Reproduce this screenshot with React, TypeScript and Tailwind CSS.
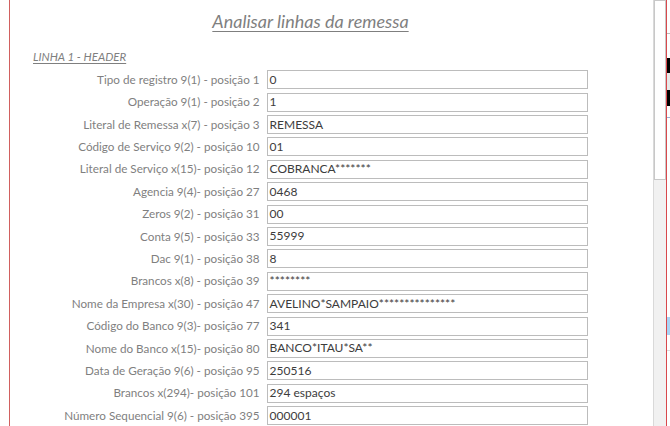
const rows: [string, string][] = [
  ["Tipo de registro 9(1) - posição 1", "0"],
  ["Operação 9(1) - posição 2", "1"],
  ["Literal de Remessa x(7) - posição 3", "REMESSA"],
  ["Código de Serviço 9(2) - posição 10", "01"],
  ["Literal de Serviço x(15)- posição 12", "COBRANCA*******"],
  ["Agencia 9(4)- posição 27", "0468"],
  ["Zeros 9(2) - posição 31", "00"],
  ["Conta 9(5) - posição 33", "55999"],
  ["Dac 9(1) - posição 38", "8"],
  ["Brancos x(8) - posição 39", "********"],
  ["Nome da Empresa x(30) - posição 47", "AVELINO*SAMPAIO***************"],
  ["Código do Banco 9(3)- posição 77", "341"],
  ["Nome do Banco x(15)- posição 80", "BANCO*ITAU*SA**"],
  ["Data de Geração 9(6) - posição 95", "250516"],
  ["Brancos x(294)- posição 101", "294 espaços"],
  ["Número Sequencial 9(6) - posição 395", "000001"],
];

export default function App() {
  return (
    <div className="flex h-[426px] w-[670px] overflow-hidden bg-white font-['Lato',sans-serif]">
      {/* form area */}
      <div className="flex flex-1">
        <div className="w-[9px]" />
        <div className="w-px bg-[#d1605f]" />
        <div className="flex w-[578px] flex-col pl-[23px] pt-[8px]">
          <h1 className="text-center text-[18px] italic text-[#7f7f7f] underline underline-offset-[3px] decoration-[1px]">
            Analisar linhas da remessa
          </h1>
          <div className="mt-[13px] text-[11.5px] italic text-[#7f7f7f] underline underline-offset-[2px]">
            LINHA 1 - HEADER
          </div>
          <div className="mt-[5px] flex flex-col gap-[3.4px]">
            {rows.map(([label, value]) => (
              <div key={label} className="flex h-[19px] items-center gap-[7px]">
                <div className="w-[227px] text-right text-[11.7px] leading-none text-[#7f7f7f]">{label}</div>
                <div className="flex h-[19px] w-[322px] items-center border border-[#bcbcbc] pl-[2px] text-[12px] leading-none text-[#3c3c3c]">
                  {value}
                </div>
              </div>
            ))}
          </div>
        </div>
      </div>
      {/* scrollbar */}
      <div className="w-[13px] border-l border-[#d9d9d9] bg-[#f1f1f1]">
        <div className="h-[180px] border border-[#c8c8c8] bg-white" />
      </div>
      <div className="w-px bg-[#d9484c]" />
      {/* neighbouring window sliver */}
      <div className="flex w-[3px] flex-col bg-white">
        <div className="mt-[33px] h-px bg-[#bdbdbd]" />
        <div className="mt-[24px] h-[15px] bg-black" />
        <div className="h-[17px] bg-[#e8e8e8]" />
        <div className="h-[16px] bg-black" />
        <div className="mt-[11px] h-px bg-[#9db3d8]" />
        <div className="mt-[199px] h-[18px] bg-[#a9d4f5]" />
        <div className="mt-[15px] h-px bg-[#dddddd]" />
      </div>
    </div>
  );
}
